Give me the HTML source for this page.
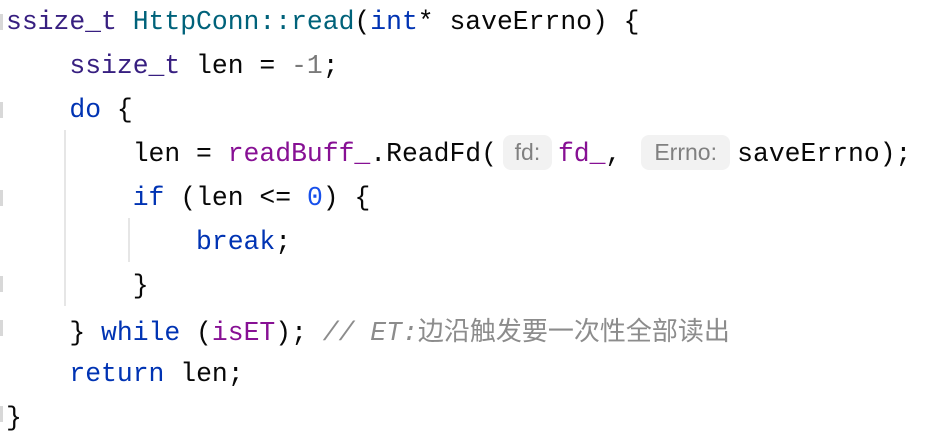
<!DOCTYPE html>
<html><head><meta charset="utf-8"><style>
body{margin:0;width:950px;height:446px;background:#fff;overflow:hidden;position:relative;font-family:"Liberation Mono","Noto Sans CJK SC",monospace;font-size:26.4px;color:#080808}
.l{position:absolute;left:6px;height:44px;line-height:44px;white-space:pre}
.k{color:#0033b3}.t{color:#371f80}.f{color:#00627a}.m{color:#871094}.n{color:#1750eb}.g{color:#7a7a7a}
.c{color:#8c8c8c;font-style:italic}.cj{font-family:"Noto Sans CJK SC",sans-serif;font-style:normal;font-size:26px;color:#8c8c8c}
.h{display:inline-block;box-sizing:border-box;text-align:center;background:#f2f2f2;color:#808080;font-family:"Liberation Sans",sans-serif;font-size:23px;line-height:35px;height:35px;border-radius:8px;padding:0;vertical-align:middle;position:relative;top:-2px}
.v{position:absolute;width:2px;background:#e6e6e6}
.mk{position:absolute;left:0;width:3px;height:16px;background:#d8d8d8}
</style></head><body>
<div class="v" style="left:64px;top:130px;height:176px"></div>
<div class="v" style="left:128px;top:218px;height:44px"></div>
<div class="mk" style="top:14px"></div><div class="mk" style="top:102px"></div><div class="mk" style="top:190px"></div><div class="mk" style="top:276px"></div><div class="mk" style="top:320px"></div><div class="mk" style="top:406px"></div>
<div class="l" style="top:0"><span class="t">ssize_t</span> <span class="f">HttpConn::read</span>(<span class="k">int</span>* saveErrno) {</div>
<div class="l" style="top:44px">    <span class="t">ssize_t</span> len = <span class="g">-1</span>;</div>
<div class="l" style="top:88px">    <span class="k">do</span> {</div>
<div class="l" style="top:132px">        len = <span class="m">readBuff_</span>.ReadFd(<span class="h" style="width:49px;margin-left:6px;margin-right:6px">fd:</span><span class="m">fd_</span>, <span class="h" style="width:89px;margin-left:4px;margin-right:7px">Errno:</span>saveErrno);</div>
<div class="l" style="top:176px">        <span class="k">if</span> (len &lt;= <span class="n">0</span>) {</div>
<div class="l" style="top:220px">            <span class="k">break</span>;</div>
<div class="l" style="top:264px">        }</div>
<div class="l" style="top:308px">    } <span class="k">while</span> (<span class="m">isET</span>); <span class="c">// ET:<span class="cj">边沿触发要一次性全部读出</span></span></div>
<div class="l" style="top:352px">    <span class="k">return</span> len;</div>
<div class="l" style="top:396px">}</div>
</body></html>
